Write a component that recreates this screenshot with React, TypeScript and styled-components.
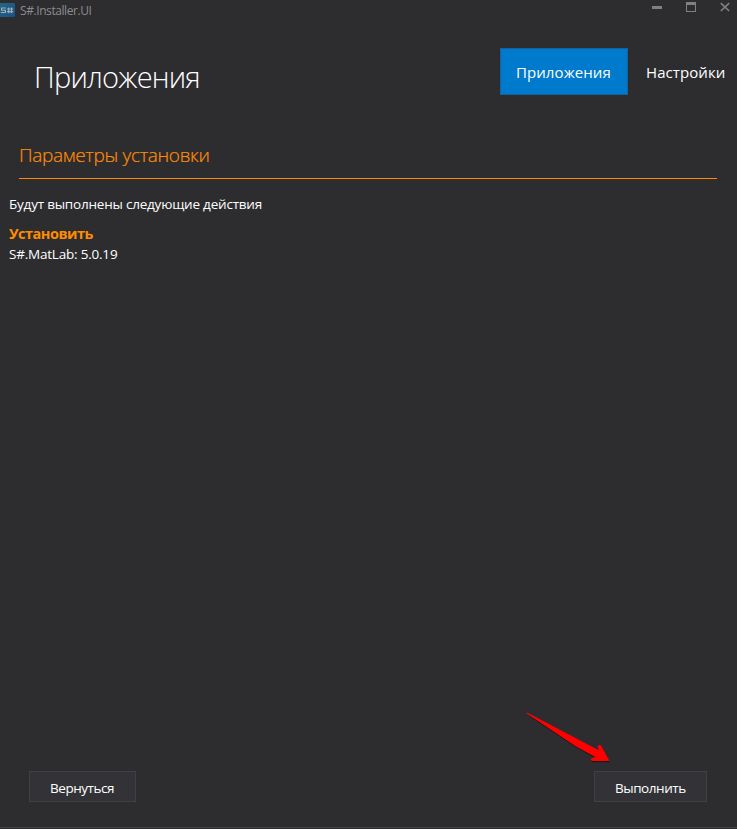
import React from "react";
import styled, { createGlobalStyle } from "styled-components";

const GlobalStyle = createGlobalStyle`
  * { box-sizing: border-box; }
  body { margin: 0; background: #2d2d30; }
`;

const Window = styled.main`
  display: flex;
  flex-direction: column;
  width: 737px;
  height: 829px;
  overflow: hidden;
  background: #2d2d30;
  color: #fff;
  font-family: "Open Sans", "Noto Sans", sans-serif;
  white-space: nowrap;
  position: relative;
`;

const TitleBar = styled.header`
  display: flex;
  align-items: flex-start;
  height: 22px;
`;

const Logo = styled.svg`
  display: block;
  margin-top: 3px;
`;

const WindowTitle = styled.span`
  margin: 2px 0 0 5px;
  font-size: 12px;
  line-height: 17px;
  letter-spacing: -0.42px;
  color: #8c8c8e;
`;

const WindowControls = styled.svg`
  display: block;
  margin-left: auto;
`;

const Header = styled.div`
  display: flex;
  align-items: flex-start;
  height: 111px;
  padding-top: 26px;
`;

const PageTitle = styled.h1`
  width: 466px;
  margin: 9px 0 0 34px;
  font-size: 29px;
  line-height: 40px;
  font-weight: 300;
  letter-spacing: -0.8px;
`;

const Tab = styled.button<{ $active?: boolean }>`
  flex: none;
  width: ${(p) => (p.$active ? "128px" : "109px")};
  height: 47px;
  padding: 0 0 0 ${(p) => (p.$active ? "15px" : "17px")};
  border: 1px solid ${(p) => (p.$active ? "#14629b" : "transparent")};
  background: ${(p) => (p.$active ? "#007acc" : "transparent")};
  color: #fff;
  font-family: inherit;
  font-size: 15px;
  letter-spacing: 0.08px;
  text-align: left;
`;

const SectionTitle = styled.h2`
  height: 46px;
  margin: 0 20px 0 19px;
  padding-top: 8px;
  border-bottom: 1px solid #ff8c00;
  color: #ff8c00;
  font-size: 19px;
  line-height: 28px;
  font-weight: 300;
  letter-spacing: -0.32px;
  -webkit-text-stroke: 0.2px #ff8c00;
`;

const Content = styled.section`
  flex: 1;
  padding: 15px 9px 0;
  font-size: 13.5px;
  line-height: 20px;
`;

const Line = styled.p`
  margin: 0;
  letter-spacing: -0.21px;
`;

const ActionTitle = styled.h3`
  margin: 10px 0 0;
  color: #ff8c00;
  font-size: 14.5px;
  line-height: 20px;
  font-weight: 700;
  letter-spacing: -0.5px;
`;

const Footer = styled.footer`
  display: flex;
  justify-content: space-between;
  height: 57px;
  padding: 0 30px 0 29px;
  border-bottom: 1px solid #434346;
  margin-bottom: 1px;
`;

const PushButton = styled.button<{ $width: number }>`
  width: ${(p) => p.$width}px;
  height: 31px;
  padding: 2px 0 0 20px;
  border: 1px solid #3f3f46;
  background: #333337;
  color: #fff;
  font-family: inherit;
  font-size: 13.5px;
  letter-spacing: -0.45px;
  text-align: left;
`;

const Arrow = styled.svg`
  position: absolute;
  left: 520px;
  top: 706px;
`;

export default function App() {
  return (
    <>
      <GlobalStyle />
      <Window>
        <TitleBar>
          <Logo width="15" height="14" viewBox="0 0 15 14">
            <defs>
              <linearGradient id="logoFill" x1="0" y1="0" x2="1" y2="1">
                <stop offset="0" stopColor="#286482" />
                <stop offset="1" stopColor="#17528a" />
              </linearGradient>
            </defs>
            <path d="M0 0h14l1 1v12l-1 1H0z" fill="url(#logoFill)" />
            <path
              d="M5.8 5H1.6v2.2h3.9v2.3H.8M8.7 4.4v5.8M11.5 4.4v5.8M7 6h6.2M7 8.6h6.2"
              fill="none"
              stroke="#a0b0ba"
              strokeWidth="1.1"
            />
          </Logo>
          <WindowTitle>S#.Installer.UI</WindowTitle>
          <WindowControls width="90" height="22" viewBox="0 0 90 22">
            <path d="M5 6h10v3H5z" fill="#808082" />
            <path d="M39 2h10v10H39zm1 3v6h8V5z" fill="#808082" fillRule="evenodd" />
            <path d="M73.8 3.2l8.4 7.8M82.2 3.2l-8.4 7.8" stroke="#808082" strokeWidth="1.6" />
          </WindowControls>
        </TitleBar>
        <Header>
          <PageTitle>Приложения</PageTitle>
          <Tab $active>Приложения</Tab>
          <Tab>Настройки</Tab>
        </Header>
        <SectionTitle>Параметры установки</SectionTitle>
        <Content>
          <Line>Будут выполнены следующие действия</Line>
          <ActionTitle>Установить</ActionTitle>
          <Line>S#.MatLab: 5.0.19</Line>
        </Content>
        <Footer>
          <PushButton $width={107}>Вернуться</PushButton>
          <PushButton $width={113}>Выполнить</PushButton>
        </Footer>
        <Arrow width="98" height="64" viewBox="0 0 98 64">
          <path
            d="M6.5 7.5l72.8 37.8-1.2-3.8q1-3 3.7-1.2L89.5 55H72q-3-1.5 0-3l3.6-.6L56 40.5z"
            fill="#000"
            opacity=".45"
            transform="translate(0.5 1.3)"
          />
          <path
            d="M6.3 7.2Q6.5 6.4 8 7l70.8 37.3-1.1-3.2c.2-2.7 2.4-2.7 3.8-.9L89.5 55H72.2c-1.9-.8-1.5-2.9.2-3.2l3.2-.5L56 40.5z"
            fill="#fe0000"
          />
        </Arrow>
      </Window>
    </>
  );
}
